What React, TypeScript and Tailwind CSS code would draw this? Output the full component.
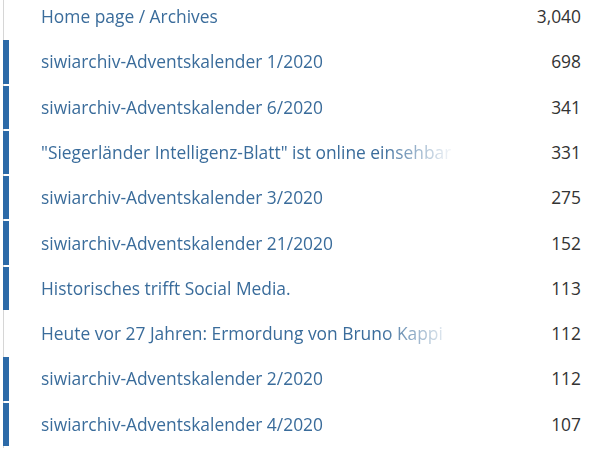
const rows = [
  { title: "Home page / Archives", views: "3,040", bar: false },
  { title: "siwiarchiv-Adventskalender 1/2020", views: "698", bar: true },
  { title: "siwiarchiv-Adventskalender 6/2020", views: "341", bar: true },
  { title: "\"Siegerländer Intelligenz-Blatt\" ist online einsehbar", views: "331", bar: true },
  { title: "siwiarchiv-Adventskalender 3/2020", views: "275", bar: true },
  { title: "siwiarchiv-Adventskalender 21/2020", views: "152", bar: true },
  { title: "Historisches trifft Social Media.", views: "113", bar: true },
  { title: "Heute vor 27 Jahren: Ermordung von Bruno Kappi", views: "112", bar: false },
  { title: "siwiarchiv-Adventskalender 2/2020", views: "112", bar: true },
  { title: "siwiarchiv-Adventskalender 4/2020", views: "107", bar: true },
];

export default function App() {
  return (
    <div className="w-[600px] h-[456px] overflow-hidden bg-white font-['Open_Sans',sans-serif]">
      <div className="relative ml-[3px] border-l border-[#d6d6d6] mt-[-5px]">
        {rows.map((row, i) => (
          <div key={i} className="relative flex items-center h-[45.3px] pl-[37px] pr-[19px]">
            {row.bar && (
              <div className="absolute left-[-1px] top-0 bottom-[2px] w-[6px] bg-[#2c6aa8]" />
            )}
            <div className="w-[414px] -mt-[3px] overflow-hidden whitespace-nowrap text-[17.4px] text-[#3a6c9b] [mask-image:linear-gradient(to_right,black_82%,transparent_100%)]">
              {row.title}
            </div>
            <div className="ml-auto -mt-[3px] text-[17.4px] text-[#333]">{row.views}</div>
          </div>
        ))}
      </div>
    </div>
  );
}
